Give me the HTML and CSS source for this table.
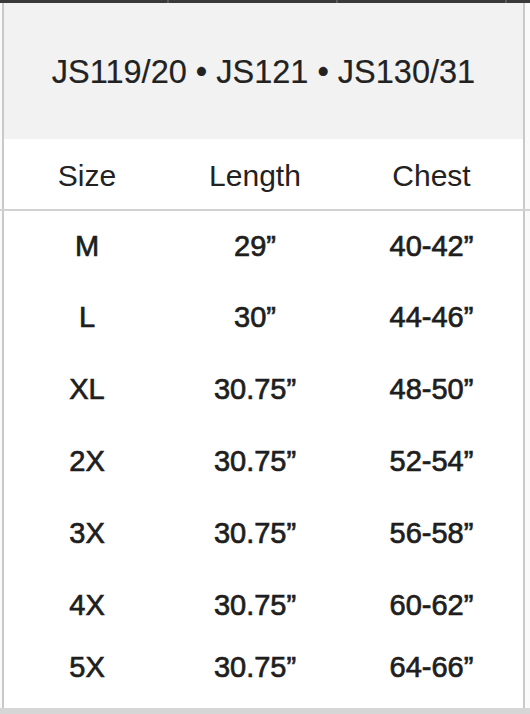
FILE: index.html
```html
<!DOCTYPE html>
<html>
<head>
<meta charset="utf-8">
<link rel="stylesheet" href="styles.css">
</head>
<body>
<div class="topbar"><span></span><span></span><span></span></div>
<div class="frame title">JS119/20 • JS121 • JS130/31</div>
<div class="frame colhead">
  <div>Size</div><div>Length</div><div>Chest</div>
</div>
<div class="divider"></div>
<div class="frame rows">
  <div>M</div><div>29”</div><div>40-42”</div>
  <div>L</div><div>30”</div><div>44-46”</div>
  <div>XL</div><div>30.75”</div><div>48-50”</div>
  <div>2X</div><div>30.75”</div><div>52-54”</div>
  <div>3X</div><div>30.75”</div><div>56-58”</div>
  <div>4X</div><div>30.75”</div><div>60-62”</div>
  <div>5X</div><div>30.75”</div><div>64-66”</div>
</div>
<div class="bottomband"></div>
</body>
</html>
```

FILE: styles.css
```css
html, body {
  margin: 0;
  padding: 0;
  background: #fafafa;
}
body {
  width: 530px;
  height: 714px;
  overflow: hidden;
  font-family: "Liberation Sans", Arial, sans-serif;
  color: #222;
}
.topbar {
  height: 3px;
  display: flex;
  background: #3a3a3a;
}
.topbar span {
  flex: 0 0 167px;
  border-right: 2px solid #5a5a5a;
}
.frame {
  margin: 0 5px 0 2px;
  border-left: 2px solid #c9c9c9;
  border-right: 2px solid #c9c9c9;
}
.title {
  height: 136px;
  background: #f2f2f3;
  display: flex;
  align-items: center;
  justify-content: center;
  font-size: 32.5px;
  padding-top: 2px;
  box-sizing: border-box;
  -webkit-text-stroke: 0.2px #222;
}
.colhead {
  height: 70px;
  background: #fff;
  display: grid;
  grid-template-columns: 166px 170px 183px;
  align-items: center;
  text-align: center;
  font-size: 30px;
  padding-top: 4px;
  box-sizing: border-box;
}
.divider {
  height: 2px;
  background: #d2d2d2;
}
.rows {
  height: 497px;
  background: #fff;
  display: grid;
  grid-template-columns: 166px 170px 183px;
  grid-template-rows: 70px repeat(5, 72px) 52px;
  align-items: center;
  text-align: center;
  font-size: 29px;
  color: #1e1e1e;
  -webkit-text-stroke: 0.7px #1e1e1e;
}
.bottomband {
  height: 6px;
  background: #d6d6d6;
}
```
